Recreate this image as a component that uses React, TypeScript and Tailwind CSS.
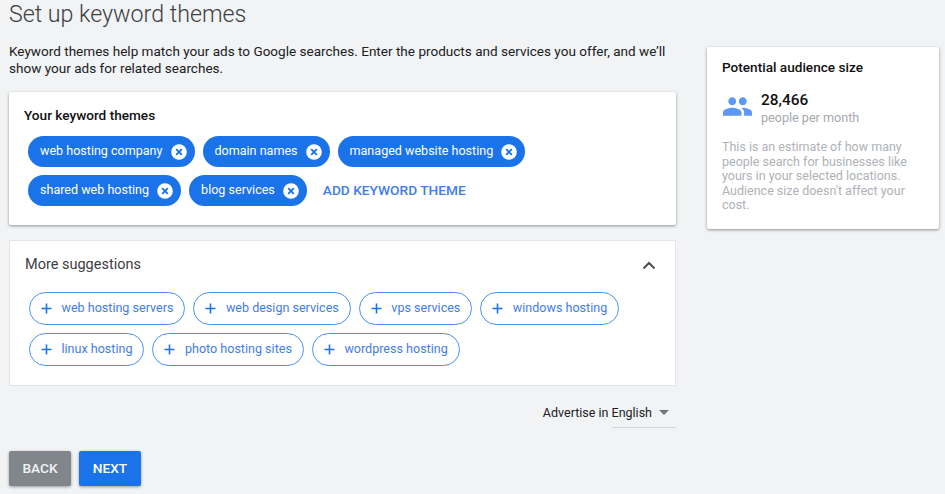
import React from "react";

function RemoveIcon() {
  return (
    <svg width="16" height="16" viewBox="0 0 16 16" className="shrink-0">
      <circle cx="8" cy="8" r="7.8" fill="#fff" />
      <path d="M5.2 5.2l5.6 5.6M10.800 5.2l-5.600 5.600" stroke="#1a73e8" strokeWidth="1.9" fill="none" />
    </svg>
  );
}

function Chip({ label }: { label: string }) {
  return (
    <div className="flex h-[31px] items-center rounded-full bg-[#1a73e8] pr-[8px] pl-3 text-[12.55px] text-white">
      <span>{label}</span>
      <span className="ml-2 flex"><RemoveIcon /></span>
    </div>
  );
}

function Suggest({ label }: { label: string }) {
  return (
    <div className="flex h-[33px] items-center rounded-full border border-[#4a90ee] bg-white pr-[11px] pl-[11px] text-[12.55px] text-[#3f7de8]">
      <svg width="11" height="11" viewBox="0 0 11 11" className="mr-[9.5px] shrink-0">
        <path d="M5.500 .5v10M.5 5.500h10" stroke="#1a73e8" strokeWidth="1.6" fill="none" />
      </svg>
      <span>{label}</span>
    </div>
  );
}

export default function App() {
  return (
    <div className="h-[494px] w-[945px] overflow-hidden bg-[#f1f3f4] font-['Roboto',sans-serif]">
      <div className="flex items-start pl-[9px]">
        <div className="w-[667px] shrink-0">
          <h1 className="text-[23.2px] leading-[28px] font-light text-[#3c4043]">Set up keyword themes</h1>
          <p className="mt-[15px] text-[13.56px] leading-[17px] text-[#202124]">
            Keyword themes help match your ads to Google searches. Enter the products and services you offer, and we’ll show your ads for related searches.
          </p>
          <div className="mt-[15px] h-[133px] rounded-[2px] bg-white pt-[15px] pl-[15px] shadow-[0_1px_3px_rgba(60,64,67,0.55)]">
            <div className="text-[13.6px] leading-[17px] font-medium text-[#111]">Your keyword themes</div>
            <div className="mt-[12px] flex items-center gap-2 pl-[4px]">
              <Chip label="web hosting company" />
              <Chip label="domain names" />
              <Chip label="managed website hosting" />
            </div>
            <div className="mt-2 flex items-center gap-2 pl-[4px]">
              <Chip label="shared web hosting" />
              <Chip label="blog services" />
              <span className="ml-2 text-[13.7px] font-medium text-[#3f7de8]">ADD KEYWORD THEME</span>
            </div>
          </div>
          <div className="mt-[15px] h-[146px] w-[667px] border border-[#e3e5e8] bg-white pl-[15px]">
            <div className="flex items-center justify-between pt-[15px] pr-[19px]">
              <span className="text-[14.5px] leading-[18px] text-[#3c4043]">More suggestions</span>
              <svg width="14" height="9" viewBox="0 0 14 9">
                <path d="M1.500 7.500L7 2l5.500 5.500" stroke="#4a4e52" strokeWidth="2" fill="none" />
              </svg>
            </div>
            <div className="mt-[18px] flex gap-2 pl-[4px]">
              <Suggest label="web hosting servers" />
              <Suggest label="web design services" />
              <Suggest label="vps services" />
              <Suggest label="windows hosting" />
            </div>
            <div className="mt-2 flex gap-2 pl-[4px]">
              <Suggest label="linux hosting" />
              <Suggest label="photo hosting sites" />
              <Suggest label="wordpress hosting" />
            </div>
          </div>
          <div className="mt-[18px] flex flex-col items-end">
            <div className="flex items-center pr-[7px] text-[12.5px] leading-[17px] text-[#202124]">
              Advertise in English
              <svg width="10" height="5" viewBox="0 0 10 5" className="ml-[7px]"><path d="M0 0h10L5 5z" fill="#757575" /></svg>
            </div>
            <div className="mt-[6px] h-px w-[64px] bg-[#d5d7da]" />
          </div>
          <div className="mt-[23px] flex gap-2">
            <button className="h-[35px] w-[62px] rounded-[2px] bg-[#80868b] text-[13.7px] font-medium text-[#f1f3f4] shadow-[0_1px_3px_rgba(60,64,67,0.5)]">BACK</button>
            <button className="h-[35px] w-[62px] rounded-[2px] bg-[#1a73e8] text-[13.7px] font-medium text-white shadow-[0_1px_3px_rgba(60,64,67,0.5)]">NEXT</button>
          </div>
        </div>
        <div className="mt-[47px] ml-[31px] h-[182px] w-[232px] shrink-0 rounded-[2px] bg-white pt-[12px] pr-[12px] pl-[15px] shadow-[0_1px_3px_rgba(60,64,67,0.55)]">
          <div className="text-[13.6px] leading-[17px] font-medium text-[#111]">Potential audience size</div>
          <div className="mt-[15px] flex">
            <svg width="29" height="19" viewBox="1 5 22 14" className="mt-[6px] ml-px shrink-0">
              <path
                d="M16 11c1.660 0 2.990-1.340 2.990-3S17.660 5 16 5c-1.660 0-3 1.340-3 3s1.340 3 3 3zm-8 0c1.660 0 2.990-1.340 2.990-3S9.660 5 8 5C6.340 5 5 6.340 5 8s1.340 3 3 3zm0 2c-2.330 0-7 1.170-7 3.500V19h14v-2.500c0-2.330-4.670-3.500-7-3.500zm8 0c-.29 0-.62.02-.97.05 1.160.84 1.970 1.970 1.970 3.450V19h6v-2.500c0-2.330-4.670-3.500-7-3.500z"
                fill="#5e97f6"
              />
            </svg>
            <div className="ml-[9px]">
              <div className="text-[15.4px] leading-[19px] font-medium text-[#111]">28,466</div>
              <div className="text-[12.6px] leading-[15px] text-[#a5a9ae]">people per month</div>
            </div>
          </div>
          <p className="mt-[15px] text-[12.5px] leading-[14.5px] text-[#aeb2b7]">
            This is an estimate of how many people search for businesses like yours in your selected locations. Audience size doesn't affect your cost.
          </p>
        </div>
      </div>
    </div>
  );
}
